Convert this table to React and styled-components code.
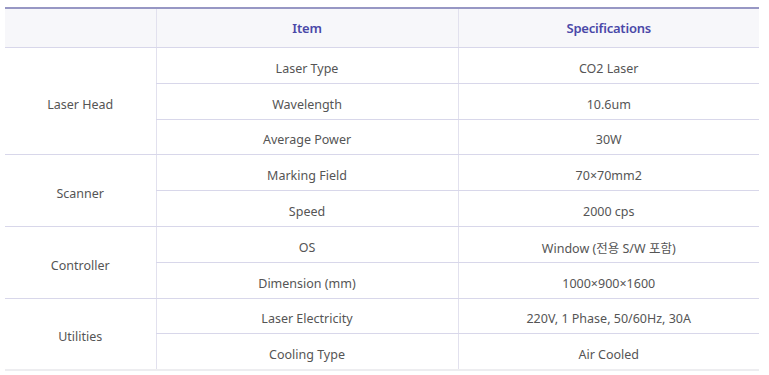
import React from 'react';
import styled, { createGlobalStyle } from 'styled-components';

const GlobalStyle = createGlobalStyle`
  body {
    margin: 0;
    background: #fff;
    font-family: "Noto Sans", "Noto Sans CJK KR", sans-serif;
  }
`;

const Wrapper = styled.div`
  padding: 7px 10px 0 5px;
`;

const SpecTable = styled.table`
  width: 754px;
  border-collapse: collapse;
  table-layout: fixed;
  border-top: 2px solid #9797c4;
  border-bottom: 2px solid #ededf0;
`;

const HeadCell = styled.th`
  height: 38px;
  padding: 0;
  background: #f7f7fa;
  color: #4a48a8;
  font-size: 13px;
  font-weight: 600;
  letter-spacing: -0.2px;
  text-align: center;
  border-bottom: 1px solid #d8d7ea;
  border-left: ${p => (p.first ? 'none' : '1px solid #e2e1ee')};
`;

const Cell = styled.td`
  box-sizing: border-box;
  height: 35.8px;
  padding: 6px 0 0;
  color: #555;
  font-size: 12.5px;
  text-align: center;
  border-bottom: 1px solid #d8d7ea;
  border-left: ${p => (p.first ? 'none' : '1px solid #e2e1ee')};
`;

const groups = [
  {
    name: 'Laser Head',
    rows: [
      ['Laser Type', 'CO2 Laser'],
      ['Wavelength', '10.6um'],
      ['Average Power', '30W'],
    ],
  },
  {
    name: 'Scanner',
    rows: [
      ['Marking Field', '70×70mm2'],
      ['Speed', '2000 cps'],
    ],
  },
  {
    name: 'Controller',
    rows: [
      ['OS', 'Window (전용 S/W 포함)'],
      ['Dimension (mm)', '1000×900×1600'],
    ],
  },
  {
    name: 'Utilities',
    rows: [
      ['Laser Electricity', '220V, 1 Phase, 50/60Hz, 30A'],
      ['Cooling Type', 'Air Cooled'],
    ],
  },
];

export default function App() {
  return (
    <Wrapper>
      <GlobalStyle />
      <SpecTable>
        <colgroup>
          <col style={{ width: 151 }} />
          <col style={{ width: 302 }} />
          <col />
        </colgroup>
        <thead>
          <tr>
            <HeadCell first />
            <HeadCell>Item</HeadCell>
            <HeadCell>Specifications</HeadCell>
          </tr>
        </thead>
        <tbody>
          {groups.map(group =>
            group.rows.map((row, i) => (
              <tr key={`${group.name}-${row[0]}`}>
                {i === 0 && (
                  <Cell first rowSpan={group.rows.length}>
                    {group.name}
                  </Cell>
                )}
                <Cell>{row[0]}</Cell>
                <Cell>{row[1]}</Cell>
              </tr>
            ))
          )}
        </tbody>
      </SpecTable>
    </Wrapper>
  );
}
